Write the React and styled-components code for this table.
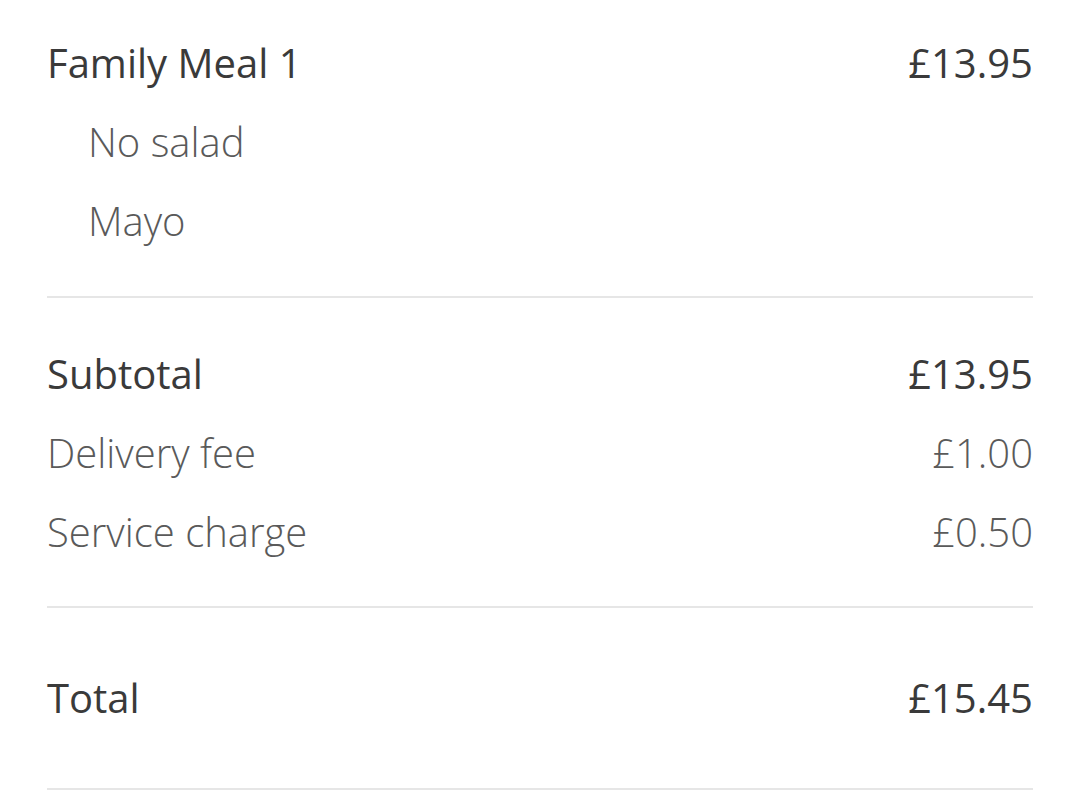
import React from "react";
import styled, { createGlobalStyle } from "styled-components";

const Global = createGlobalStyle`
  html, body { margin: 0; padding: 0; background: #ffffff; }
  body { font-family: "Open Sans", "Noto Sans", sans-serif; }
`;

const Page = styled.div`
  width: 1080px;
  padding: 23px 47px 0 47px;
  box-sizing: border-box;
`;

const Section = styled.div`
  display: flex;
  flex-direction: column;
  padding: ${(p) => (p.$loose ? "50px 0 51px" : "36px 0 35px")};
  &:first-child { padding-top: 0; padding-bottom: 36px; }
  border-bottom: 2px solid #e6e6e6;
`;

const Row = styled.div`
  display: flex;
  justify-content: space-between;
  align-items: baseline;
  height: 79px;
  line-height: 79px;
  font-size: 40px;
  padding-left: ${(p) => (p.$indent ? "41px" : "0")};
  color: ${(p) => (p.$light ? "#5a5a5a" : "#3a3a3a")};
  font-weight: ${(p) => (p.$light ? 300 : 400)};
`;

const Label = styled.span``;
const Amount = styled.span`
  text-align: right;
`;

export default function App() {
  return (
    <>
      <Global />
      <Page>
        <Section>
          <Row>
            <Label>Family Meal 1</Label>
            <Amount>£13.95</Amount>
          </Row>
          <Row $indent $light>
            <Label>No salad</Label>
          </Row>
          <Row $indent $light>
            <Label>Mayo</Label>
          </Row>
        </Section>
        <Section>
          <Row>
            <Label>Subtotal</Label>
            <Amount>£13.95</Amount>
          </Row>
          <Row $light>
            <Label>Delivery fee</Label>
            <Amount>£1.00</Amount>
          </Row>
          <Row $light>
            <Label>Service charge</Label>
            <Amount>£0.50</Amount>
          </Row>
        </Section>
        <Section $loose>
          <Row>
            <Label>Total</Label>
            <Amount>£15.45</Amount>
          </Row>
        </Section>
      </Page>
    </>
  );
}
